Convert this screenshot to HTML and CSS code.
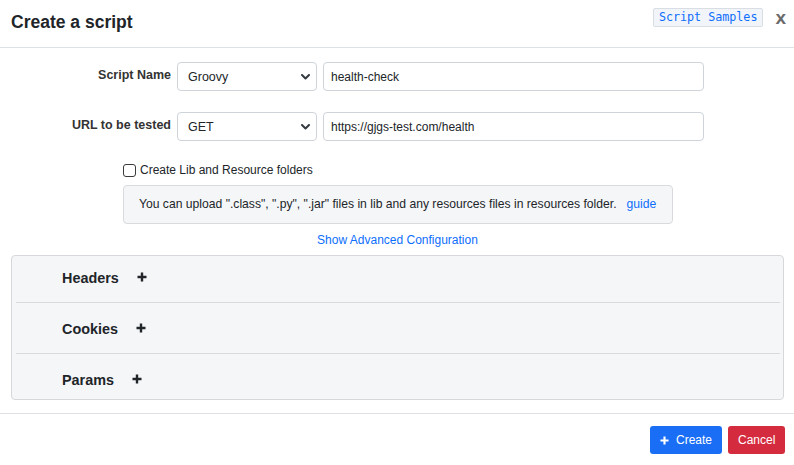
FILE: index.html
```html
<!DOCTYPE html>
<html lang="en">
<head>
<meta charset="utf-8">
<title>Create a script</title>
<link rel="stylesheet" href="styles.css">
</head>
<body>
<div class="modal">
  <header class="modal-header">
    <h1 class="modal-title">Create a script</h1>
    <div class="header-actions">
      <span class="samples">Script Samples</span>
      <span class="close">x</span>
    </div>
  </header>

  <main class="modal-body">
    <div class="form-row">
      <label class="form-label">Script Name</label>
      <div class="select"><span>Groovy</span><svg class="chev" width="9" height="6" viewBox="0 0 9 6"><path d="M1 1l3.5 3.5L8 1" fill="none" stroke="#343a40" stroke-width="2" stroke-linecap="round" stroke-linejoin="round"/></svg></div>
      <div class="input">health-check</div>
    </div>
    <div class="form-row">
      <label class="form-label">URL to be tested</label>
      <div class="select"><span>GET</span><svg class="chev" width="9" height="6" viewBox="0 0 9 6"><path d="M1 1l3.5 3.5L8 1" fill="none" stroke="#343a40" stroke-width="2" stroke-linecap="round" stroke-linejoin="round"/></svg></div>
      <div class="input">https://gjgs-test.com/health</div>
    </div>

    <div class="check-row">
      <span class="checkbox"></span>
      <span class="check-label">Create Lib and Resource folders</span>
    </div>

    <div class="info-box">
      You can upload ".class", ".py", ".jar" files in lib and any resources files in resources folder.<a class="link guide">guide</a>
    </div>

    <div class="advanced"><a class="link">Show Advanced Configuration</a></div>

    <div class="accordion">
      <div class="acc-item"><span class="acc-title">Headers</span><svg class="plus" width="10" height="10" viewBox="0 0 10 10"><path d="M5 0.5v9M0.5 5h9" stroke="#212529" stroke-width="2.4"/></svg></div>
      <div class="acc-item"><span class="acc-title">Cookies</span><svg class="plus" width="10" height="10" viewBox="0 0 10 10"><path d="M5 0.5v9M0.5 5h9" stroke="#212529" stroke-width="2.4"/></svg></div>
      <div class="acc-item"><span class="acc-title">Params</span><svg class="plus" width="10" height="10" viewBox="0 0 10 10"><path d="M5 0.5v9M0.5 5h9" stroke="#212529" stroke-width="2.4"/></svg></div>
    </div>
  </main>

  <footer class="modal-footer">
    <button class="btn btn-primary"><svg width="9" height="9" viewBox="0 0 10 10"><path d="M5 0.5v9M0.5 5h9" stroke="#fff" stroke-width="2.4"/></svg>Create</button>
    <button class="btn btn-danger">Cancel</button>
  </footer>
</div>
</body>
</html>
```

FILE: styles.css
```css
* { box-sizing: border-box; }
html, body { margin: 0; padding: 0; background: #fff; }
body {
  font-family: "Liberation Sans", Arial, Helvetica, sans-serif;
  color: #212529;
  font-size: 12px;
  width: 794px;
  height: 465px;
  overflow: hidden;
}
.modal { display: flex; flex-direction: column; }

.modal-header {
  height: 48px;
  border-bottom: 1px solid #dee2e6;
  display: flex;
  align-items: center;
  justify-content: space-between;
  padding: 0 8px 0 11px;
}
.modal-title {
  margin: 0;
  font-size: 17.5px;
  font-weight: bold;
  line-height: 20px;
  margin-top: -3px;
}
.header-actions { display: flex; align-items: center; gap: 12px; margin-top: -12px; }
.samples {
  font-family: "DejaVu Sans Mono", "Liberation Mono", monospace;
  font-size: 11.7px;
  line-height: 17px;
  color: #0d6efd;
  background: #f1f4f9;
  border: 1px solid #d9dee4;
  border-radius: 2px;
  padding: 0 5px;
}
.close {
  font-size: 19px;
  font-weight: bold;
  color: #6b6b6b;
  line-height: 20px;
  margin-top: 1px;
}

.modal-body { padding: 14px 10px 0 11px; display: flex; flex-direction: column; }

.form-row { display: flex; align-items: center; height: 29px; margin-bottom: 21px; }
.form-row + .form-row { margin-bottom: 0; }
.form-label {
  width: 160px;
  text-align: right;
  font-weight: bold;
  font-size: 12.5px;
  color: #333;
  margin-right: 6px;
  margin-top: -3px;
}
.select {
  width: 140px;
  height: 29px;
  border: 1px solid #ced4da;
  border-radius: 4px;
  display: flex;
  align-items: center;
  justify-content: space-between;
  padding: 0 6px 0 10px;
  font-size: 12.5px;
  margin-right: 6px;
}
.chev { display: block; margin-top: 1px; }
.input {
  width: 381px;
  height: 29px;
  border: 1px solid #ced4da;
  border-radius: 4px;
  display: flex;
  align-items: center;
  padding: 0 7px;
  font-size: 12px;
}

.check-row {
  display: flex;
  align-items: center;
  margin: 21px 0 0 112px;
  height: 16px;
}
.checkbox {
  width: 13px;
  height: 13px;
  border: 1px solid #3a3a3a;
  border-radius: 3px;
  background: #fff;
  margin-right: 4px;
  margin-top: 1px;
}
.check-label { font-size: 12px; }

.info-box {
  margin: 7px 0 0 112px;
  width: 550px;
  background: #f5f6f8;
  border: 1px solid #d9dadd;
  border-radius: 4px;
  padding: 10px 15px;
  line-height: 17px;
  font-size: 12.15px;
}
.link { color: #0d6efd; text-decoration: none; }
.guide { margin-left: 10px; }

.advanced { text-align: center; margin-top: 8px; line-height: 16px; font-size: 12px; }

.accordion {
  margin-top: 7px;
  background: #f5f6f8;
  border: 1px solid #d6d8db;
  border-radius: 4px;
  padding: 0 3px 0 4px;
}
.acc-item {
  display: flex;
  align-items: center;
  padding: 16px 0 14px 46px;
  border-bottom: 1px solid #d9dadc;
}
.acc-item:first-child { padding-top: 12px; }
.acc-item:last-child { border-bottom: none; padding-bottom: 9px; }
.acc-title { font-size: 14.4px; font-weight: bold; line-height: 20px; }
.plus { margin-left: 18px; margin-top: -3px; }

.modal-footer {
  margin-top: 13px;
  border-top: 1px solid #dee2e6;
  display: flex;
  justify-content: flex-end;
  gap: 6px;
  padding: 12px 9px 0 0;
}
.btn {
  font-family: "Liberation Sans", Arial, sans-serif;
  font-size: 12px;
  color: #fff;
  border: none;
  border-radius: 3px;
  height: 28px;
  padding: 0 10px;
  display: flex;
  align-items: center;
  gap: 7px;
}
.btn-primary { background: #1a6ef5; }
.btn-danger { background: #d52b3e; width: 57px; }
```
